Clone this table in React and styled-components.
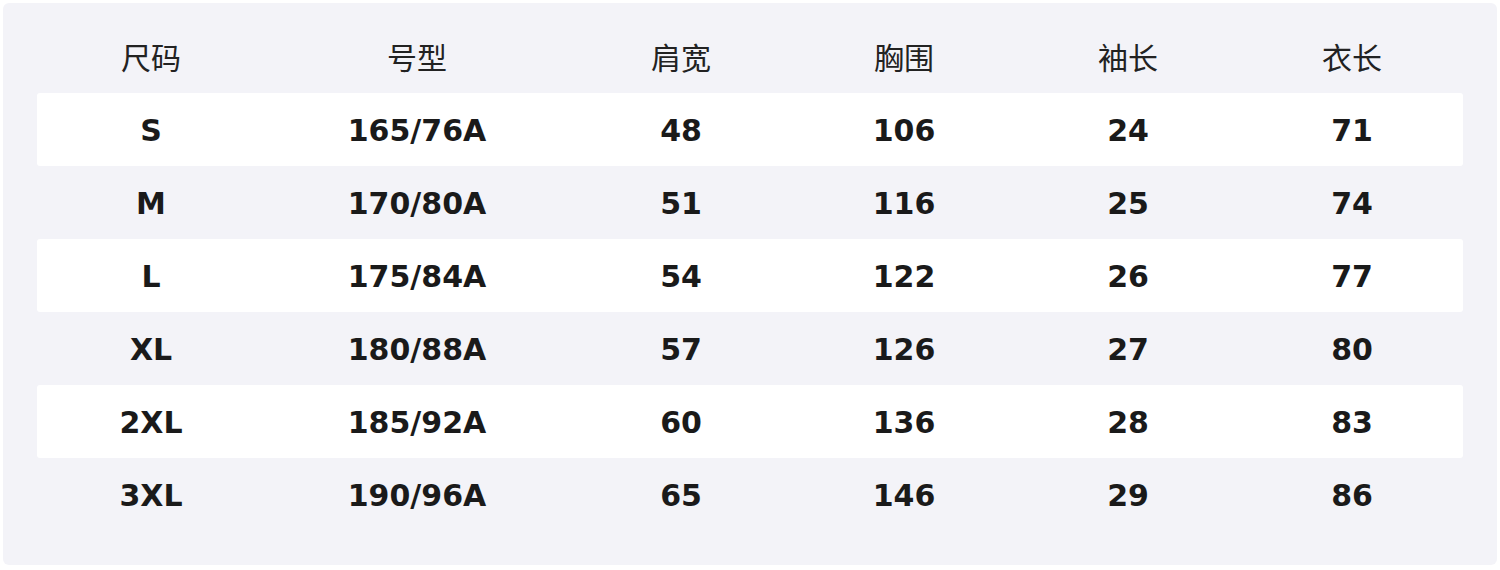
import styled, { createGlobalStyle } from 'styled-components';

const GlobalStyle = createGlobalStyle`
  body {
    margin: 0;
    padding: 3px;
    background: #fff;
    font-family: "DejaVu Sans", "Noto Sans CJK SC", sans-serif;
  }
`

const Panel = styled.div`
  background-color: #f3f3f8;
  border-radius: 6px;
  height: 562px;
  padding: 0 34px;
  box-sizing: border-box;
`

const Row = styled.div`
  display: grid;
  grid-template-columns: 228px 304px 224px 222px 226px 222px;
  align-items: center;
  height: ${(p) => (p.$head ? '90px' : '73px')};
  background-color: ${(p) => (p.$white ? '#fff' : 'transparent')};
  border-radius: 3px;
`

const HeadCell = styled.div`
  text-align: center;
  font-size: 30px;
  color: #222;
  padding-top: 16px;
`

const Cell = styled.div`
  text-align: center;
  font-size: 30px;
  font-weight: 700;
  color: #1a1a1a;
  padding-top: 2px;
`

const headers = ['尺码', '号型', '肩宽', '胸围', '袖长', '衣长']

const rows = [
  ['S', '165/76A', '48', '106', '24', '71'],
  ['M', '170/80A', '51', '116', '25', '74'],
  ['L', '175/84A', '54', '122', '26', '77'],
  ['XL', '180/88A', '57', '126', '27', '80'],
  ['2XL', '185/92A', '60', '136', '28', '83'],
  ['3XL', '190/96A', '65', '146', '29', '86'],
]

function App() {
  return (
    <>
      <GlobalStyle />
      <Panel>
        <Row $head>
          {headers.map((h) => (
            <HeadCell key={h}>{h}</HeadCell>
          ))}
        </Row>
        {rows.map((r, i) => (
          <Row key={r[0]} $white={i % 2 === 0}>
            {r.map((c, j) => (
              <Cell key={j}>{c}</Cell>
            ))}
          </Row>
        ))}
      </Panel>
    </>
  );
}

export default App;
